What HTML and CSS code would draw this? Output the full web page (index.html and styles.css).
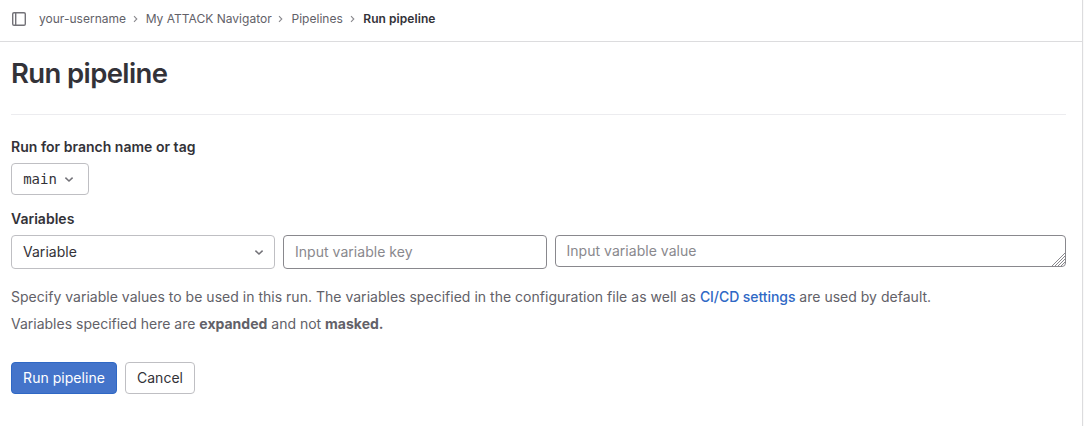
FILE: index.html
```html
<!DOCTYPE html>
<html lang="en">
<head>
<meta charset="utf-8">
<title>Run pipeline</title>
<link rel="stylesheet" href="styles.css">
</head>
<body>
<div class="page">
  <header class="top-bar">
    <svg class="sidebar-icon" width="16" height="16" viewBox="0 0 16 16" fill="none" stroke="#737278" stroke-width="1.4"><rect x="1.7" y="1.7" width="12.6" height="12.6" rx="1.3"/><path d="M4.7 2v12"/></svg>
    <nav class="breadcrumbs">
      <a class="crumb crumb-user">your-username</a>
      <svg class="sep" width="8" height="8" viewBox="0 0 8 8"><path d="M2 1.2 4.8 4 2 6.8"/></svg>
      <a class="crumb crumb-project">My ATTACK Navigator</a>
      <svg class="sep" width="8" height="8" viewBox="0 0 8 8"><path d="M2 1.2 4.8 4 2 6.8"/></svg>
      <a class="crumb crumb-pipelines">Pipelines</a>
      <svg class="sep" width="8" height="8" viewBox="0 0 8 8"><path d="M2 1.2 4.8 4 2 6.8"/></svg>
      <span class="crumb current">Run pipeline</span>
    </nav>
  </header>
  <main class="content">
    <h1 class="title">Run pipeline</h1>
    <form class="form">
      <label class="label">Run for branch name or tag</label>
      <button type="button" class="btn branch"><span class="branch-name">main</span><svg class="chevron" width="16" height="16" viewBox="0 0 16 16"><path d="M4.4 6.6 8 10l3.6-3.4"/></svg></button>
      <label class="label label-variables">Variables</label>
      <div class="variables">
        <div class="field select"><span>Variable</span><svg class="chevron" width="16" height="16" viewBox="0 0 16 16"><path d="M4.4 6.6 8 10l3.6-3.4"/></svg></div>
        <div class="field input"><span>Input variable key</span></div>
        <div class="field input textarea"><span>Input variable value</span><svg class="grip" width="14" height="14" viewBox="0 0 14 14"><path d="M1 14 14 1M4 14 14 4M7 14l7-7M10 14l4-4"/></svg></div>
      </div>
      <div class="help">
        <p class="help-line help-first">Specify variable values to be used in this run. The variables specified in the configuration file as well as <a class="link">CI/CD settings</a> are used by default.</p>
        <p class="help-line help-second">Variables specified here are <b>expanded</b> and not <b>masked.</b></p>
      </div>
      <div class="actions">
        <button type="button" class="btn confirm">Run pipeline</button>
        <button type="button" class="btn cancel">Cancel</button>
      </div>
    </form>
  </main>
</div>
</body>
</html>
```
FILE: styles.css
```css
* { box-sizing: border-box; }
body {
  margin: 0;
  background: #fafafa;
  color: #333238;
  font: 14px/20px Inter, "Liberation Sans", sans-serif;
}
.page {
  width: 1083px;
  height: 426px;
  background: #fff;
  border-right: 1px solid #dcdcde;
}
.top-bar {
  display: flex;
  align-items: center;
  height: 42px;
  padding: 0 11px 4px;
  border-bottom: 1px solid #dcdcde;
}
.sidebar-icon { margin-right: 12px; }
.breadcrumbs { display: flex; align-items: center; }
.crumb {
  color: #626168;
  font-size: 12px;
  line-height: 16px;
  letter-spacing: 0.02px;
  white-space: nowrap;
}
.crumb-user { width: 86.7px; }
.crumb-project { width: 125.8px; }
.crumb-pipelines { width: 51.8px; }
.current { color: #333238; font-weight: 600; letter-spacing: 0.06px; }
.sep {
  width: 8px;
  margin: 0 6px;
  fill: none;
  stroke: #89888d;
  stroke-width: 1.1;
}
.content { padding: 0 16px 0 11px; }
.title {
  margin: 0;
  height: 73px;
  padding-top: 13px;
  border-bottom: 1px solid #ececef;
  font-size: 27.5px;
  line-height: 36px;
  font-weight: 620;
  letter-spacing: -0.62px;
}
.form { padding-top: 22px; }
.label { display: block; font-weight: 600; letter-spacing: 0.02px; }
.btn {
  display: inline-flex;
  align-items: center;
  justify-content: center;
  height: 32px;
  padding: 0;
  border: 1px solid #bfbfc3;
  border-radius: 4px;
  background: #fff;
  color: #333238;
  font: inherit;
}
.branch { width: 78px; margin-top: 6px; gap: 4px; }
.branch-name { font-family: "DejaVu Sans Mono", monospace; font-size: 14px; }
.chevron { fill: none; stroke: #737278; stroke-width: 1.5; }
.label-variables { margin-top: 14px; }
.variables {
  display: grid;
  grid-template-columns: 264px 264px 511px;
  gap: 8px;
  align-items: start;
  margin-top: 6px;
}
.field {
  display: flex;
  align-items: center;
  height: 34px;
  padding: 0 11px;
  border: 1px solid #89888d;
  border-radius: 4px;
  letter-spacing: 0.03px;
}
.select { justify-content: space-between; padding-right: 7px; border-color: #bfbfc3; }
.input { color: #89888d; }
.textarea { position: relative; height: 32px; padding-left: 10.5px; }
.grip {
  position: absolute;
  right: 0;
  bottom: 0;
  fill: none;
  stroke: #89888d;
  stroke-width: 1;
}
.help { padding-top: 18px; color: #626168; }
.help-line { margin: 0 0 7px; white-space: nowrap; }
.help-first { letter-spacing: 0.017px; }
.link { color: #2f68c5; font-weight: 500; letter-spacing: -0.07px; }
.actions { display: flex; gap: 8px; margin-top: 28px; }
.confirm { width: 106px; border-color: #2f68c5; background: #4474ca; color: #fff; letter-spacing: 0.03px; }
.cancel { width: 70px; }
```
